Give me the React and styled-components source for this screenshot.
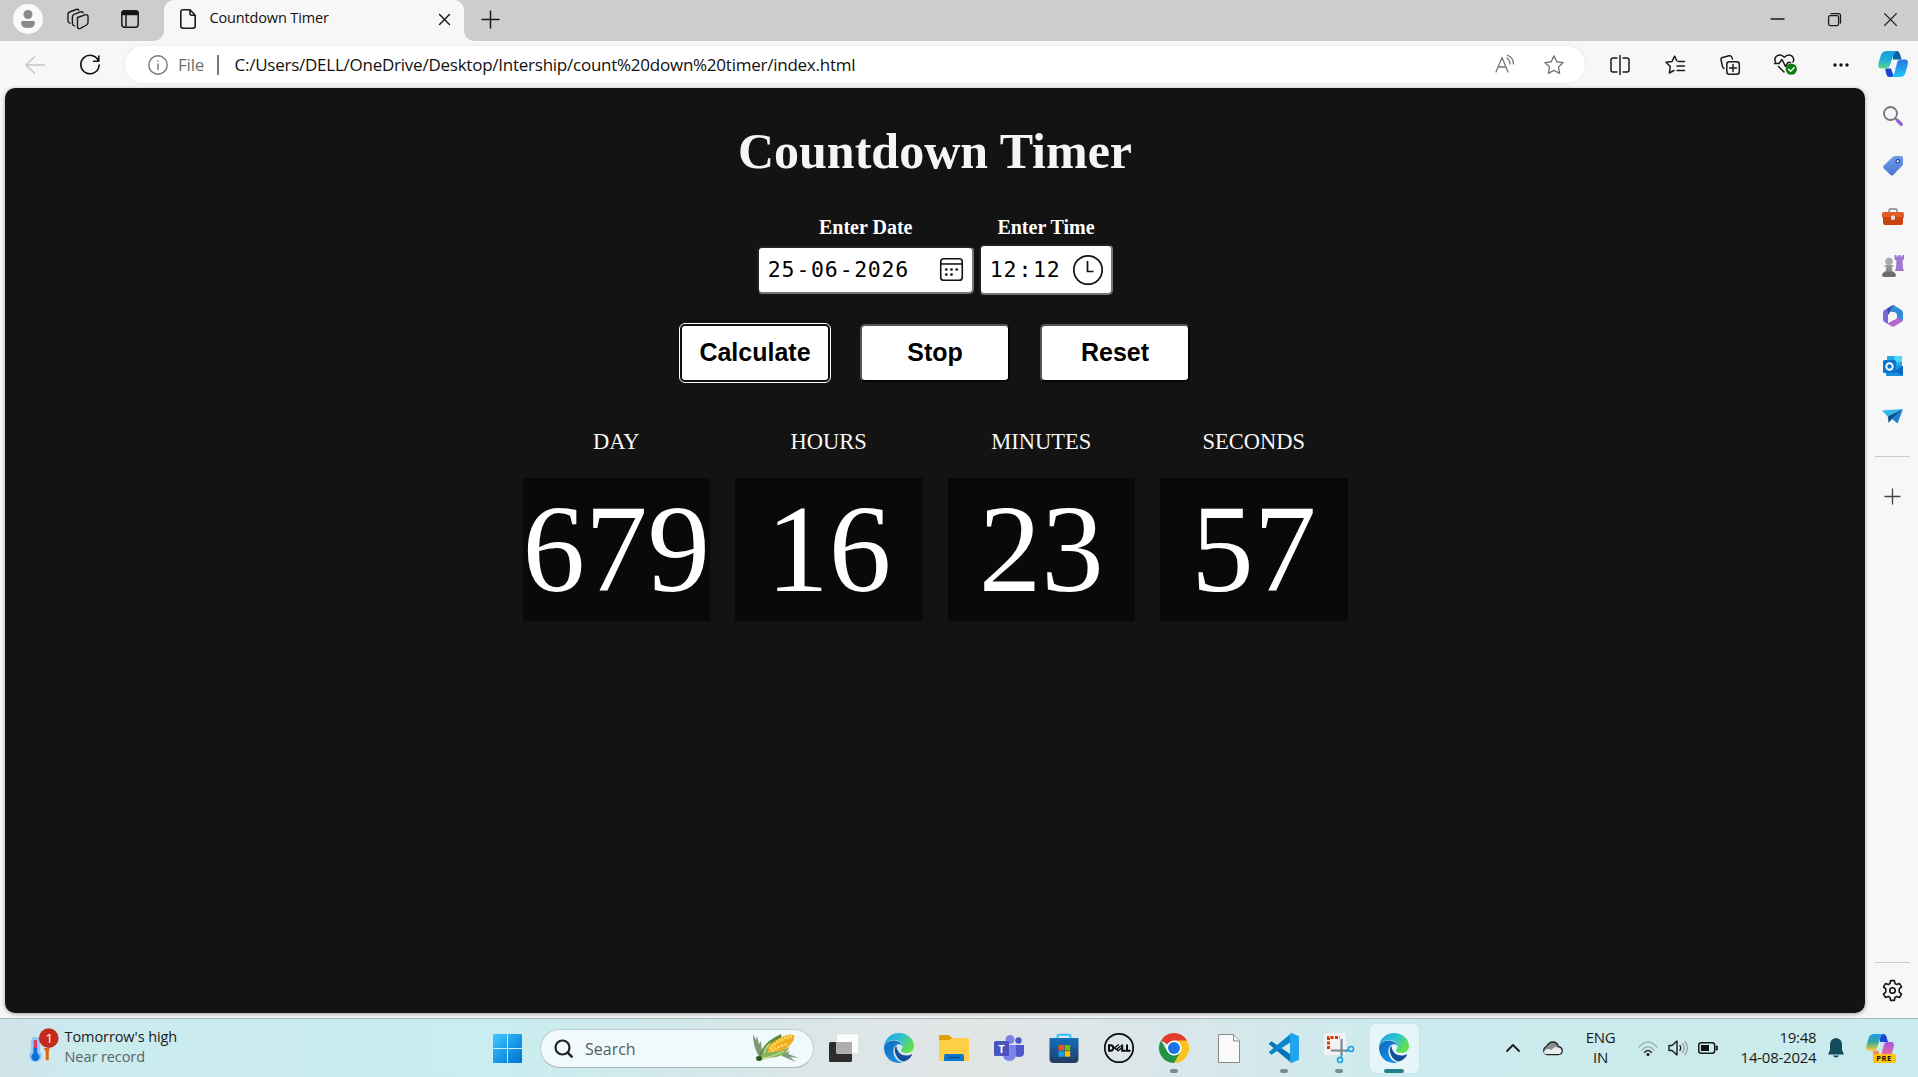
import React from 'react';
import styled, { createGlobalStyle } from 'styled-components';

const Global = createGlobalStyle`
  * { box-sizing: border-box; }
  body { margin: 0; background: #f7f7f7; overflow: hidden; }
  svg { display: block; flex: none; overflow: visible; }
`;

const UI = `"Open Sans", "Noto Sans", sans-serif`;
const SERIF = `"Liberation Serif", "Times New Roman", serif`;

const Screen = styled.div`
  width: 1918px; height: 1077px; display: flex; flex-direction: column;
  background: #f7f7f7; font-family: ${UI}; color: #111;
`;
const Slot = styled.div`
  width: ${p => p.$w}px; flex: none; display: flex; align-items: center; justify-content: center;
`;
const Spacer = styled.div`flex: 1;`;

/* ---------- tab strip ---------- */
const TabStrip = styled.div`
  height: 41px; flex: none; display: flex; background: #cdcdcd;
`;
const StripSlot = styled(Slot)`height: 38px;`;
const Tab = styled.div`
  width: 300px; height: 41px; background: #f7f7f7; border-radius: 10px 10px 0 0;
  display: flex; align-items: center; padding: 0 14px 3px 16px; position: relative;
  &::before, &::after {
    content: ''; position: absolute; bottom: 0; width: 10px; height: 10px;
  }
  &::before { left: -10px; background: radial-gradient(circle at 0 0, transparent 9.5px, #f7f7f7 10px); }
  &::after { right: -10px; background: radial-gradient(circle at 100% 0, transparent 9.5px, #f7f7f7 10px); }
`;
const TabTitle = styled.span`
  flex: 1; margin-left: 13.5px; padding-bottom: 2px; font-size: 14.5px; line-height: 20px; letter-spacing: -0.15px; white-space: nowrap;
`;
const Avatar = styled.div`
  width: 30px; height: 30px; border-radius: 50%; background: #fafafa; display: flex; align-items: center; justify-content: center;
`;

/* ---------- toolbar ---------- */
const Toolbar = styled.div`
  height: 47px; flex: none; display: flex; align-items: center; background: #f7f7f7;
`;
const AddressBar = styled.div`
  width: 1460px; height: 37px; border-radius: 19px; background: #fff; display: flex; align-items: center;
  padding: 0 21px 0 22.5px; box-shadow: 0 0 4px rgba(0,0,0,.07);
`;
const Scheme = styled.span`
  margin-left: 10.5px; font-size: 17px; line-height: 24px; color: #6f6f6f; width: 39px; letter-spacing: -0.2px;
`;
const Divider = styled.div`width: 1.5px; height: 20px; background: #777;`;
const Url = styled.span`
  margin-left: 16px; flex: 1; font-size: 17px; line-height: 24px; color: #111; white-space: nowrap; letter-spacing: -0.245px;
`;

/* ---------- body ---------- */
const Middle = styled.div`height: 930px; flex: none; display: flex; padding-left: 5px;`;
const Page = styled.main`
  width: 1860px; height: 925px; border-radius: 10px; background: #131313;
  display: flex; flex-direction: column; align-items: center; box-shadow: 0 1px 4px rgba(0,0,0,.35);
  font-family: ${SERIF}; color: #fff;
`;
const Heading = styled.h1`
  margin: 34px 0 35px; font-size: 50px; line-height: 58px; font-weight: 700; color: #f5f5f5;
`;
const Fields = styled.div`display: flex; gap: 5px; margin-bottom: 29px;`;
const Field = styled.div`display: flex; flex-direction: column; align-items: center;`;
const Label = styled.label`font-size: 20px; line-height: 24px; font-weight: 700; margin-bottom: 5px;`;
const FieldHolder = styled.div`height: 51px; display: flex; align-items: center;`;
const Input = styled.div`
  width: ${p => p.$w}px; height: ${p => p.$h}px; background: #fff; border: 2px solid;
  border-color: #222 #767676 #767676 #222; border-radius: 5px;
  display: flex; align-items: center; justify-content: space-between; padding: 0 ${p => p.$pr}px 0 7.5px;
  font-family: "DejaVu Sans Mono", "Liberation Mono", monospace; font-size: 21.5px; line-height: 28px; color: #000;
`;
const Digits = styled.span`display: flex; padding-top: 1px;`;
const Part = styled.span`padding: 0 1px; letter-spacing: 0.8px;`;
const Sep = styled.span`width: 13.7px; text-align: center;`;

const Buttons = styled.div`display: flex; gap: 30px; margin-bottom: 47.5px;`;
const Button = styled.button`
  width: 150px; height: 57.5px; padding: 0 0 1px; background: #fff; color: #000; border-radius: 5px;
  border: 2px solid; border-color: ${p => (p.$focus ? '#101010' : '#555 #050505 #050505 #555')};
  outline: ${p => (p.$focus ? '1.5px solid #fff' : 'none')};
  font: 700 25px/28px "Liberation Sans", Arial, sans-serif;
`;
const Counters = styled.div`display: flex; gap: 25px;`;
const Counter = styled.div`width: 187.5px; display: flex; flex-direction: column; align-items: center;`;
const CounterName = styled.div`font-size: 22.5px; line-height: 26px; color: #f8f8f8; margin-bottom: 22.5px;`;
const CounterValue = styled.div`
  width: 100%; height: 143px; background: #090909; font-size: 125px; line-height: 142px; text-align: center;
`;

/* ---------- side rail ---------- */
const Rail = styled.aside`flex: 1; display: flex; flex-direction: column; align-items: center; padding: 3px 0 0 2px;`;
const RailItem = styled.div`height: ${p => p.$h || 50}px; display: flex; align-items: center; justify-content: center;`;
const RailRule = styled.div`width: 35px; height: 1px; background: #cacaca;`;

/* ---------- taskbar ---------- */
const Taskbar = styled.footer`
  height: 59px; flex: none; display: flex; align-items: center; border-top: 1px solid #a5b8bb;
  background: linear-gradient(90deg, #d0e3e9 0, #cbebee 90px, #c9edf0 500px, #dbe6e8 800px, #e1e5e5 980px, #dae6e9 1150px, #cdebee 1400px, #caebed 1918px);
`;
const Weather = styled.div`display: flex; width: 480px; padding-left: 28px; height: 58px; align-items: center;`;
const TwoLines = styled.div`
  display: flex; flex-direction: column; text-align: ${p => p.$align || 'left'}; padding-bottom: 1.5px;
  font-size: ${p => p.$size || 15}px; line-height: 20px; color: #1a1a1a; letter-spacing: ${p => p.$ls || 0}px; white-space: nowrap;
`;
const Muted = styled.span`color: #566467;`;
const SearchBox = styled.div`
  width: 274px; height: 39px; border-radius: 20px; background: #f0f9fb; border: 1px solid #bccfd2; border-bottom-color: #a5b6b9;
  display: flex; align-items: center; padding: 0 13px 0 13px; margin-left: 5px;
`;
const SearchText = styled.span`flex: 1; margin-left: 12px; padding-top: 1px; font-size: 16px; line-height: 22px; color: #565b5d; letter-spacing: 0;`;
const AppCell = styled.div`
  width: 49px; height: 49px; margin: 0 3px; flex: none; border-radius: 5px; position: relative;
  display: flex; align-items: center; justify-content: center;
  ${p => p.$active && 'background: #e6f5f7; box-shadow: 0 0 1px #9fb5b8;'}
  &::after {
    content: ''; position: absolute; bottom: 0; left: 50%; transform: translateX(-50%);
    width: ${p => (p.$active ? 20 : p.$run ? 8 : 0)}px; height: 4px; border-radius: 2px;
    background: ${p => (p.$active ? '#23808d' : '#7d898c')};
  }
`;

const S = ({ w = 20, h = w, vb, children, c = '#1a1a1a', sw = 1.4 }) => (
  <svg width={w} height={h} viewBox={vb || `0 0 ${w} ${h}`} fill="none" stroke={c} strokeWidth={sw} strokeLinecap="round" strokeLinejoin="round">{children}</svg>
);

const Workspaces = () => (
  <S w={22} sw={1.4}>
    <path d="M10.500 9.500l7.500-2.700q2.500-.6 3 1.200v6.500q0 1.700-1.500 2.500l-6 3.300q-2.500 1-3-1.200v-7.500q0-1.600 0-2.100z" fill="#cdcdcd" />
    <path d="M7.500 17.800l-1.300-.6q-.8-.5-.8-2V8.800Q5.400 7 7 6.400l6.500-2.500q1.800-.6 2.700.9M3 15.200l-1.200-.7q-.8-.5-.8-1.800V6.300Q1 4.600 2.600 4l6.500-2.500Q11 .9 11.800 2.300" />
  </S>
);
const TabActions = () => (
  <S w={18} sw={1.5}>
    <rect x=".8" y=".8" width="16.400" height="16.400" rx="3" />
    <path d="M.8 4.500V3.500a2.700 2.700 0 0 1 2.700-2.700h11a2.700 2.700 0 0 1 2.700 2.700v1z" fill="#111" />
    <path d="M5 5v12" />
  </S>
);
const PageIcon = () => (
  <S w={16} h={20} sw={1.6}><path d="M3 .8h7l5.200 5.400V17q0 2.200-2.200 2.200H3Q.8 19.200.8 17V3Q.8.8 3 .8zM10 1v3.500q0 1.700 1.700 1.700H15" /></S>
);
const Cross = ({ w = 11, sw = 1.6 }) => <S w={w} vb="0 0 12 12" sw={sw}><path d="M.6.6l10.800 10.800M11.400.6L.6 11.400" /></S>;
const Plus = ({ w = 17, c }) => <S w={w} vb="0 0 16 16" sw={1.400} c={c}><path d="M8 0v16M0 8h16" /></S>;

const star = 'M10 .9l2.800 5.800 6.300.9-4.600 4.400 1.100 6.300L10 15.300l-5.600 3 1.100-6.300L.9 7.600l6.300-.9z';

const CopilotIcon = ({ w = 30, color }) => (
  <svg width={w} height={w * 0.87} viewBox="0 0 30 26">
    <defs>
      <linearGradient id={`ca${color ? 1 : 0}`} x1="0" y1="0" x2="0" y2="1">
        <stop offset="0" stopColor={color ? '#2299e8' : '#15a0dc'} /><stop offset=".5" stopColor={color ? '#35a8a0' : '#1eafd4'} /><stop offset="1" stopColor={color ? '#ffcb2c' : '#62d68c'} />
      </linearGradient>
      <linearGradient id={`cb${color ? 1 : 0}`} x1="0" y1="0" x2="0" y2="1">
        <stop offset="0" stopColor={color ? '#a257e8' : '#2878de'} /><stop offset="1" stopColor={color ? '#ff7182' : '#20c4fb'} />
      </linearGradient>
    </defs>
    <path d="M15 0h4q2 0 3 3l1.500 5.500H15z" fill={color ? '#1b45cf' : '#0a62a5'} />
    <path d="M7 17.500h6L16 26h-4.500Q9 26 8.300 23z" fill={color ? '#ff8a45' : '#1746d6'} />
    <path d="M9 0h10q-2.500.8-3.500 4L12 14q-1 3.500-4 3.500H3Q-.7 17.500.5 12L3 4Q4.500 0 9 0z" fill={`url(#ca${color ? 1 : 0})`} />
    <path d="M22 8.500h5q4 0 2.600 5.500l-2.200 8q-1.300 4-5.400 4h-9q2.600-.8 3.400-4L19 12q1-3.500 3-3.500z" fill={`url(#cb${color ? 1 : 0})`} />
  </svg>
);

const EdgeIcon = () => (
  <svg width="30" height="30" viewBox="0 0 30 30">
    <defs>
      <linearGradient id="e1" x1="0" y1="0" x2="1" y2=".5"><stop offset="0" stopColor="#1c9be0" /><stop offset=".55" stopColor="#2fc3d3" /><stop offset="1" stopColor="#62e04b" /></linearGradient>
      <linearGradient id="e2" x1="0" y1="0" x2=".6" y2="1"><stop offset="0" stopColor="#0f67b8" /><stop offset="1" stopColor="#1792e6" /></linearGradient>
    </defs>
    <path d="M0 14C.5 6 7 0 15 0c8.500 0 15 6 15 13 0 4.500-3.500 7-7.500 7-3 0-5.500-1-5.500-2.500 0-1 1.500-1.500 1.500-4C18.500 10 15 7 10.500 7 5 7 1 10 0 14z" fill="url(#e1)" />
    <path d="M0 14.500C.5 10.500 5 7.500 9.500 7.500c5 0 8.500 2.500 9 6-.8-1.700-2-2.200-3.500-2.200-4 0-6 4-5.500 8.200.5 5 4.500 9.500 9.500 9.800C9 32 0 25 0 14.500z" fill="url(#e2)" />
    <path d="M12.300 12.500c-1.500 1.600-1.800 4-1.300 6.500 1 5 5 9.500 9 9.500 3.500-1 6.500-3.500 8-6.500.2-.6-.3-.9-.8-.6-1.500.8-3 1.100-4.700 1.100-5 0-9.500-3-10.200-10z" fill="#124f9b" />
  </svg>
);
const StartIcon = () => (
  <svg width="29" height="29" viewBox="0 0 29 29">
    <defs><linearGradient id="st" gradientUnits="userSpaceOnUse" x1="0" y1="0" x2="29" y2="29"><stop offset="0" stopColor="#45c8ff" /><stop offset=".5" stopColor="#1c9be8" /><stop offset="1" stopColor="#0070d2" /></linearGradient></defs>
    <path d="M1 0h13v14H0V1q0-1 1-1zM15 0h13q1 0 1 1v13H15zM0 15h14v14H1q-1 0-1-1zM15 15h14v13q0 1-1 1H15z" fill="url(#st)" />
  </svg>
);
const CornIcon = () => (
  <svg width="48" height="30" viewBox="0 0 48 30">
    <path d="M8 25Q1 15 1 1l3 6 1-4 2 8 2-3 1 12zM30 21l8-3-2 3 11 4-9-1 6 5-14-6z" fill="#7c9a78" />
    <path d="M7 25Q9 10 29 1l1 5-14 18z" fill="#5e8d3a" />
    <path d="M12 21Q14 13 26 6q10-6 16-4 2 4-5 11-10 10-20 11z" fill="#f0ae1c" />
    <path d="M18 16Q26 6 40 3" stroke="#ffd65a" strokeWidth="3" fill="none" strokeDasharray="2 1" />
    <path d="M17 20Q26 13 36 11" stroke="#ffe08a" strokeWidth="2.500" fill="none" strokeDasharray="2 1.500" />
    <path d="M5 27q4-3 6-8 1-7 9-10-5 6-4 10 10 1 22-5-6 11-21 11-4 0-10 3z" fill="#86b45c" />
    <path d="M10 25q8 0 22-7M12 20q2-6 6-9" stroke="#c6dc9b" strokeWidth="1.300" fill="none" />
    <ellipse cx="7" cy="25.500" rx="3" ry="2.400" fill="#31591f" />
  </svg>
);
const TaskView = () => (
  <svg width="30" height="28" viewBox="0 0 30 28">
    <rect x="0" y="8" width="23" height="20" rx="1.500" fill="#2d2d2d" />
    <rect x="7.500" y="0" width="22" height="19.500" rx="1" fill="#fff" fillOpacity=".9" stroke="#dadada" strokeWidth=".5" />
    <path d="M7.500 8H23v11.500H7.500z" fill="#aeaeae" />
  </svg>
);
const FolderIcon = () => (
  <svg width="30" height="27" viewBox="0 0 30 27">
    <path d="M0 1.500Q0 0 1.500 0H9q1 0 2 1l2 2h12v6H0z" fill="#dda000" />
    <path d="M0 5h9q1.500 0 3-1l2-1h15q1 0 1 1v22H0z" fill="#ffcf48" />
    <path d="M5 26v-5q0-2 2-2h16q2 0 2 2v5z" fill="#0c76cc" /><path d="M9 22.500h12" stroke="#064f94" strokeWidth="1.500" />
  </svg>
);
const Letter = styled.text`font-family: "Open Sans", sans-serif; font-weight: 700;`;
const TeamsIcon = () => (
  <svg width="30" height="27" viewBox="0 0 30 27">
    <circle cx="24.500" cy="5.500" r="3.200" fill="#5059c9" /><circle cx="16" cy="4.500" r="4.500" fill="#7b83eb" />
    <path d="M20 10h10v8q0 4-5 4-3 0-5-2z" fill="#5059c9" /><path d="M9 10h13v9q0 7-7 7-6 0-6-7z" fill="#7b83eb" />
    <rect x="0" y="6" width="15" height="15" rx="1.500" fill="#4b53bc" />
    <Letter x="7.500" y="17.500" fontSize="11" fill="#fff" textAnchor="middle">T</Letter>
  </svg>
);
const StoreIcon = () => (
  <svg width="30" height="30" viewBox="0 0 30 30">
    <defs><linearGradient id="sto" x1="0" y1="0" x2="0" y2="1"><stop offset="0" stopColor="#1070bd" /><stop offset="1" stopColor="#243a60" /></linearGradient></defs>
    <path d="M8.500 6V3.500Q8.500 1.800 10 1.800h10q1.500 0 1.500 1.700V6" fill="none" stroke="#2cc3f3" strokeWidth="2" />
    <path d="M.5 5h29v21q0 4-4 4h-21q-4 0-4-4z" fill="url(#sto)" />
    <path d="M9.500 12H15v5.500H9.500z" fill="#f25022" /><path d="M15.700 12h5.500v5.500h-5.500z" fill="#7fba00" />
    <path d="M9.500 18.200H15v5.500H9.500z" fill="#00a4ef" /><path d="M15.700 18.200h5.500v5.500h-5.500z" fill="#ffb900" />
  </svg>
);
const DellIcon = () => (
  <svg width="30" height="30" viewBox="0 0 30 30">
    <circle cx="15" cy="15" r="14.200" fill="none" stroke="#0a0a0a" strokeWidth="1.700" />
    <g fill="none" stroke="#0a0a0a" strokeWidth="2"><path d="M5 12.300v5.400h1.300q3 0 3-2.700t-3-2.700z" /><path d="M14.800 11.500l-4.300 3.300 4 3.500M16.800 13l-4 3M18 14.800l-4 3" strokeWidth="1.400" /><path d="M18.200 11.500v6.200h3.600M23 11.500v6.200h3.500" /></g>
  </svg>
);
const ChromeIcon = () => (
  <svg width="30" height="30" viewBox="0 0 30 30">
    <path d="M15 15L2 7.500A15 15 0 0 1 28 7.500z" fill="#e33b2e" />
    <path d="M15 7.500h13a15 15 0 0 1-13 22.500l6.500-11.200z" fill="#fcc31e" />
    <path d="M2 7.500l6.500 11.300L15 22.500l6.500-3.700L15 30A15 15 0 0 1 2 7.500z" fill="#229342" />
    <circle cx="15" cy="15" r="7.500" fill="#fff" /><circle cx="15" cy="15" r="6" fill="#1a73e8" />
  </svg>
);
const FileIcon = () => (
  <svg width="22" height="29" viewBox="0 0 22 29"><path d="M.5.5h15l6 6.500v21.500H.5z" fill="#fafafa" stroke="#8b8b8b" /><path d="M15.500.5V7h6" fill="#eee" stroke="#8b8b8b" /></svg>
);
const CodeIcon = () => (
  <svg width="30" height="30" viewBox="0 0 30 30">
    <path d="M2.500 8.200L.4 10q-.7.700 0 1.400L22.500 30V22z" fill="#0075b7" />
    <path d="M2.500 21.800L.4 20q-.7-.7 0-1.400L22.500 0v8.500z" fill="#0a86cc" />
    <path d="M22.500 0L30 3.300v23.400L22.500 30l-1.500-1V1z" fill="#23a2ee" />
  </svg>
);
const SnipIcon = () => (
  <svg width="30" height="30" viewBox="0 0 30 30">
    <rect x="0" y="0" width="22" height="22" rx="2" fill="#f2f2f2" />
    <path d="M4.500 16V4.500H16" fill="none" stroke="#d83b01" strokeWidth="3" strokeDasharray="3 1.500" />
    <path d="M17.500 6v16M7 17.500h17" stroke="#7c8790" strokeWidth="2.200" />
    <circle cx="27" cy="16" r="2.500" fill="none" stroke="#1b9de2" strokeWidth="1.500" /><circle cx="16" cy="27" r="2.500" fill="none" stroke="#1b9de2" strokeWidth="1.500" />
    <path d="M21 18.500l4-1.500M18 21l-1 3.500" stroke="#1b9de2" strokeWidth="1.500" />
  </svg>
);

const WeatherIcon = () => (
  <svg width="36.500" height="38" viewBox="0 0 37 38">
    <path d="M3 12a4 4 0 0 1 9 0v10a6.500 6.500 0 1 1-9 0z" fill="#94c9f8" />
    <path d="M7.500 11v14" stroke="#d0406f" strokeWidth="3.500" /><path d="M7.500 19v7" stroke="#1170d6" strokeWidth="3.500" /><circle cx="7.500" cy="28" r="4.200" fill="#1170d6" />
    <path d="M16 19h6l-1 4v8.500h-3V23z" fill="#e2620f" />
    <circle cx="21" cy="9" r="10" fill="#c42b1c" />
    <text x="21.500" y="14" fontSize="13.500" fill="#fff" textAnchor="middle" fontFamily="Open Sans">1</text>
  </svg>
);

const MagnifierColor = () => (
  <svg width="20" height="20" viewBox="0 0 20 20"><circle cx="7.500" cy="7.500" r="6.500" fill="#f5f8fa" stroke="#7b7b7b" strokeWidth="1.900" /><path d="M12 12l2 2" stroke="#777" strokeWidth="2" /><path d="M14.500 14.500l3.700 3.700" stroke="#9563cf" strokeWidth="3.400" strokeLinecap="round" /></svg>
);
const TagIcon = () => (
  <svg width="20" height="20" viewBox="0 0 20 20"><defs><linearGradient id="tg" x1="0" y1="0" x2="0" y2="1"><stop offset="0" stopColor="#719be8" /><stop offset="1" stopColor="#4a75cf" /></linearGradient></defs><path d="M12 0h6q2 0 2 2v6q0 1-.8 1.800l-9 9.200q-1.200 1.200-2.600 0L.8 12.400q-1.300-1.400 0-2.800L10 .8Q10.800 0 12 0z" fill="url(#tg)" /><circle cx="14.800" cy="5.300" r="1.800" fill="#fff" stroke="#2b4a9d" strokeWidth="1.300" /></svg>
);
const ToolboxIcon = () => (
  <svg width="22" height="17" viewBox="0 0 22 17"><path d="M7 5V2.500Q7 1 8.500 1h5Q15 1 15 2.500V5" fill="none" stroke="#7d8790" strokeWidth="1.500" /><rect x="0" y="4" width="22" height="6" rx="1.500" fill="#e55c25" /><path d="M1 9h20v6q0 2-2 2H3q-2 0-2-2z" fill="#c9430f" /><rect x="9" y="7.500" width="4" height="4.500" rx="1.500" fill="#d8dde0" /></svg>
);
const ChessIcon = () => (
  <svg width="22" height="22" viewBox="0 0 22 22"><path d="M12.500 0h2v1.500h1.800V0h2.200v1.500h1.800V0H22v3.500q0 1.500-1.500 2l.5 7.500 1 3h-9l1-3 .5-7.500q-2-.5-2-2z" fill="#a078d3" /><circle cx="7" cy="6.500" r="3.700" fill="#aaa" /><path d="M2.500 10.200h9v1.500H9.700l.8 5.300h-7l.8-5.300H2.500z" fill="#8f8f8f" /><path d="M3 16.500h8q3 1.500 3 3.500 0 2-2 2H2q-2 0-2-2 0-2 3-3.500z" fill="#6c6c6c" /></svg>
);
const M365Icon = () => (
  <svg width="20" height="22" viewBox="0 0 20 22">
    <path d="M10 0L1.500 5Q0 6 0 8v6q0 2 1.500 3l3.500 2V10q0-2 2-3l6-3.500z" fill="#7669d2" />
    <path d="M10 0q.5 0 1 .3L18.500 5Q20 6 20 8v6.500q0 1-.7 1.700L14 13V9.500L7 6z" fill="#358bd8" />
    <path d="M7 6l3-6-5.500 3.200Q4 8 6 10z" fill="#2f4fae" />
    <path d="M4 18.500l4.500 2.800q1.500.8 3 0l7-4.300q1-.7 1.300-2L14 12.500 9 16z" fill="#b06bcb" />
    <circle cx="10" cy="11" r="4" fill="#f7f7f7" />
  </svg>
);
const OutlookIcon = () => (
  <svg width="20" height="20" viewBox="0 0 20 20"><path d="M5 0h13q1 0 1 1v10H4V1q0-1 1-1z" fill="#28a8e8" /><path d="M11.500 0H19v6h-7.500z" fill="#4fd8f8" /><path d="M3 9l17 1v9q0 1-1 1H4q-1 0-1-1z" fill="#168fdc" /><path d="M20 10l-8 5 8 4.500z" fill="#0a69bd" /><rect x="0" y="4" width="13" height="13" rx="1.500" fill="#0876d1" /><circle cx="6.500" cy="10.500" r="3.200" fill="none" stroke="#fff" strokeWidth="1.900" /></svg>
);
const PlaneIcon = () => (
  <svg width="21" height="15" viewBox="0 0 21 15"><path d="M0 1.500L21 0 6 8z" fill="#35b6ec" /><path d="M21 0l-5.500 14.500L10 10z" fill="#1483d5" /><path d="M6 7.500L21 0 10 10l-3.500 4z" fill="#0c4b8d" /></svg>
);
const GearIcon = () => (
  <S w={21} vb="0 0 20 20" c="#111" sw={1.500}><path d="M8.200 .6h3.600l.6 2.800 1.600.9 2.700-.9 1.900 3.200-2.200 1.900v3l2.200 1.900-1.900 3.200-2.700-.9-1.600.9-.6 2.800H8.200l-.6-2.800-1.600-.9-2.700.9-1.900-3.200 2.200-1.900v-3L1.400 6.600l1.900-3.200 2.700.9 1.600-.9z" /><circle cx="10" cy="10" r="2.600" /></S>
);

const CalendarIcon = () => (
  <svg width="23" height="23" viewBox="0 0 22 22" fill="none" stroke="#111" strokeWidth="1.500"><rect x=".7" y=".7" width="20.600" height="20.600" rx="3" /><path d="M.7 5.700h20.600" /><g fill="#111" stroke="none"><circle cx="6" cy="11" r="1.300" /><circle cx="11" cy="11" r="1.300" /><circle cx="16" cy="11" r="1.300" /><circle cx="6" cy="15.800" r="1.300" /><circle cx="11" cy="15.800" r="1.300" /></g></svg>
);
const ClockIcon = () => (
  <svg width="30" height="30" viewBox="0 0 30 30" fill="none" stroke="#111" strokeWidth="1.700"><circle cx="15" cy="15" r="14.200" /><path d="M14.500 6v10.500h6" /></svg>
);

const PreBadge = styled.span`
  position: absolute; left: 7px; bottom: 0; height: 9px; width: 23px; border-radius: 2px; background: #ffc20e; color: #1c1400;
  font: 700 7.500px/9px ${UI}; letter-spacing: 0.6px; text-align: center;
`;
const PreWrap = styled.div`position: relative; width: 30px; height: 29px;`;

const counters = [['DAY', '679'], ['HOURS', '16'], ['MINUTES', '23'], ['SECONDS', '57']];
const rail = [MagnifierColor, TagIcon, ToolboxIcon, ChessIcon, M365Icon, OutlookIcon, PlaneIcon];
const apps = [
  [TaskView], [EdgeIcon], [FolderIcon], [TeamsIcon], [StoreIcon], [DellIcon], [ChromeIcon, 1], [FileIcon], [CodeIcon, 1], [SnipIcon, 1], [EdgeIcon, 1, 1],
];

export default function App() {
  return (
    <Screen>
      <Global />
      <TabStrip>
        <StripSlot $w={56}>
          <Avatar><svg width="14" height="18" viewBox="0 0 14 18" fill="#8a8a8a"><circle cx="7" cy="4.500" r="4.500" /><path d="M1.500 11h11Q14 11 14 12.500q0 5.500-7 5.500t-7-5.500Q0 11 1.500 11z" /></svg></Avatar>
        </StripSlot>
        <StripSlot $w={44}><Workspaces /></StripSlot>
        <StripSlot $w={60}><TabActions /></StripSlot>
        <Slot $w={4} />
        <Tab>
          <PageIcon />
          <TabTitle>Countdown Timer</TabTitle>
          <Cross />
        </Tab>
        <StripSlot $w={53}><Plus /></StripSlot>
        <Spacer />
        <StripSlot $w={57}><S w={13} h={2} sw={1.300}><path d="M0 1h13" /></S></StripSlot>
        <StripSlot $w={57}><S w={13} sw={1.300}><rect x=".6" y="2.600" width="10" height="10" rx="1.500" /><path d="M3 .6h7.500q2 0 2 2V10" /></S></StripSlot>
        <StripSlot $w={55}><Cross w={13} sw={1.200} /></StripSlot>
      </TabStrip>

      <Toolbar>
        <Slot $w={70}><S w={20} h={18} c="#c6c6c6" sw={1.400}><path d="M9.500.8L1 9l8.500 8.200M1 9h18.500" /></S></Slot>
        <Slot $w={40}><S w={20} c="#111" sw={1.600}><path d="M18.500 6A9.200 9.200 0 1 0 19.200 10M18.800 1v5.200h-5.200" /></S></Slot>
        <Slot $w={15} />
        <AddressBar>
          <S w={20} c="#777" sw={1.400}><circle cx="10" cy="10" r="9.200" /><path d="M10 9v5.500M10 5.700v.3" /></S>
          <Scheme>File</Scheme>
          <Divider />
          <Url>C:/Users/DELL/OneDrive/Desktop/Intership/count%20down%20timer/index.html</Url>
          <S w={20} c="#777" sw={1.300}><path d="M1 17L7 2.500 13 17M3.200 12h7.600M12 3q3 2 3 6M12.500.2Q18.500 3 18.500 9" /></S>
          <Slot $w={29.500} />
          <S w={20} c="#777"><path d={star} /></S>
        </AddressBar>
        <Slot $w={7} />
        <Slot $w={55}><S w={20} sw={1.500}><path d="M7 3H3Q1 3 1 5v10q0 2 2 2h4M13 3h4q2 0 2 2v10q0 2-2 2h-4M10 .5v19" /></S></Slot>
        <Slot $w={55}><S w={20} sw={1.500}><path d="M12 6L9.500 1.200 7 6.500l-6 .8L5.300 11.500l-1 6.500L9 15.500M13.500 6.500H19.500M12 11h7.500M12 15.500h7.500" /></S></Slot>
        <Slot $w={55}><S w={20} sw={1.500}><rect x="6.800" y="6.800" width="12.500" height="12.500" rx="2.500" /><path d="M13 9.500v7M9.500 13h7M4 13.500Q3 13 2.500 11.500L1 5q-.4-2 1.500-2.500L9 .8q2-.4 2.700 1.200L12.500 4" /></S></Slot>
        <Slot $w={57}>
          <S w={23} h={21} sw={1.500}><path d="M1.500 8Q-.3 4 3 1.800 7-.5 10.300 3.200 14-.5 17.700 1.800 21 4.500 19 8M.5 9.500H5L8 5.500l3.500 7 2.500-4h2.500M4.500 12.500l5.500 5.500" /><circle cx="17.300" cy="15.200" r="5.600" fill="#107c10" stroke="none" /><path d="M14.700 15.300l2 1.900 3.300-3.500" stroke="#fff" /></S>
        </Slot>
        <Slot $w={53}><S w={16} h={4}><g fill="#111" stroke="none"><circle cx="2" cy="2" r="1.700" /><circle cx="8" cy="2" r="1.700" /><circle cx="14" cy="2" r="1.700" /></g></S></Slot>
        <Slot $w={51}><CopilotIcon /></Slot>
      </Toolbar>

      <Middle>
        <Page>
          <Heading>Countdown Timer</Heading>
          <Fields>
            <Field>
              <Label>Enter Date</Label>
              <FieldHolder>
                <Input $w={217} $h={48} $pr={9}>
                  <Digits><Part>25</Part><Sep>-</Sep><Part>06</Part><Sep>-</Sep><Part>2026</Part></Digits>
                  <CalendarIcon />
                </Input>
              </FieldHolder>
            </Field>
            <Field>
              <Label>Enter Time</Label>
              <FieldHolder>
                <Input $w={133.500} $h={51} $pr={7.500}>
                  <Digits><Part>12</Part><Sep>:</Sep><Part>12</Part></Digits>
                  <ClockIcon />
                </Input>
              </FieldHolder>
            </Field>
          </Fields>
          <Buttons>
            <Button $focus>Calculate</Button>
            <Button>Stop</Button>
            <Button>Reset</Button>
          </Buttons>
          <Counters>
            {counters.map(([name, value]) => (
              <Counter key={name}>
                <CounterName>{name}</CounterName>
                <CounterValue>{value}</CounterValue>
              </Counter>
            ))}
          </Counters>
        </Page>
        <Rail>
          {rail.map((Icon, i) => <RailItem key={i}><Icon /></RailItem>)}
          <RailItem $h={15} />
          <RailRule />
          <RailItem $h={79}><Plus w={15} c="#444" /></RailItem>
          <Spacer />
          <RailRule />
          <RailItem $h={55}><GearIcon /></RailItem>
        </Rail>
      </Middle>

      <Taskbar>
        <Weather>
          <WeatherIcon />
          <TwoLines $size={14.5} $ls={-0.08}><span>Tomorrow's high</span><Muted>Near record</Muted></TwoLines>
        </Weather>
        <Slot $w={55}><StartIcon /></Slot>
        <SearchBox>
          <S w={19} c="#222" sw={2.200}><circle cx="8.500" cy="8.500" r="7" /><path d="M13.700 13.700l4 4" strokeWidth="2.600" /></S>
          <SearchText>Search</SearchText>
          <CornIcon />
        </SearchBox>
        <Slot $w={2.500} />
        {apps.map(([Icon, run, active], i) => <AppCell key={i} $run={run} $active={active}><Icon /></AppCell>)}
        <Spacer />
        <Slot $w={49}><S w={14} h={8} sw={1.800}><path d="M1 7l6-6 6 6" /></S></Slot>
        <Slot $w={31}><svg width="21" height="15" viewBox="0 0 21 15"><path d="M5 13.500A4.200 4.200 0 0 1 4.500 5.500Q7 1 11 1q4 0 5.500 4.500 3.700.8 3.700 4.300 0 3.700-4 3.700z" fill="#8c8f90" stroke="#222" strokeWidth="1.300" /><path d="M3 13q-2-2 0-4 4-2 6 0l4-3 5 1q3 3 0 6z" fill="#e8ecec" /></svg></Slot>
        <Slot $w={65}><TwoLines $align="center" $ls={-0.3}><span>ENG</span><span>IN</span></TwoLines></Slot>
        <Slot $w={30}><S w={20} h={15} sw={1.500}><g stroke="#a3b4b7"><path d="M1 6Q10-4 19 6M4 9Q10 2.500 16 9" /></g><path d="M6.500 11.500Q10 7.500 13.500 11.500" stroke="#333" /><circle cx="10" cy="13.500" r="1.500" fill="#111" stroke="none" /></S></Slot>
        <Slot $w={30}><S w={20} h={16} sw={1.400}><path d="M1 5.500h3L9 1v14l-5-4.500H1zM12 5.500Q13.500 8 12 10.500" /><path d="M14.500 3.500Q18 8 14.500 12.500M17 1.500Q22 8 17 14.500" stroke="#97a8ab" /></S></Slot>
        <Slot $w={30}><S w={20} h={12} sw={1.500}><rect x=".8" y=".8" width="15.900" height="10.400" rx="2.500" /><path d="M3 3h8v6H3z" fill="#111" stroke="none" /><path d="M18.800 4.500v3" strokeWidth="2" /></S></Slot>
        <Slot $w={13} />
        <Slot $w={85}><TwoLines $align="right" $ls={-0.25}><span>19:48</span><span>14-08-2024</span></TwoLines></Slot>
        <Slot $w={30}><svg width="16" height="20" viewBox="0 0 16 20" fill="#124b5c"><path d="M8 0q6 .5 6 7v5l2 4.500H0L2 12V7q0-6.500 6-7zM5 17.500h6q-.8 2-3 2t-3-2z" /></svg></Slot>
        <Slot $w={59}><PreWrap><CopilotIcon w={28} color /><PreBadge>PRE</PreBadge></PreWrap></Slot>
        <Slot $w={8} />
      </Taskbar>
    </Screen>
  );
}
